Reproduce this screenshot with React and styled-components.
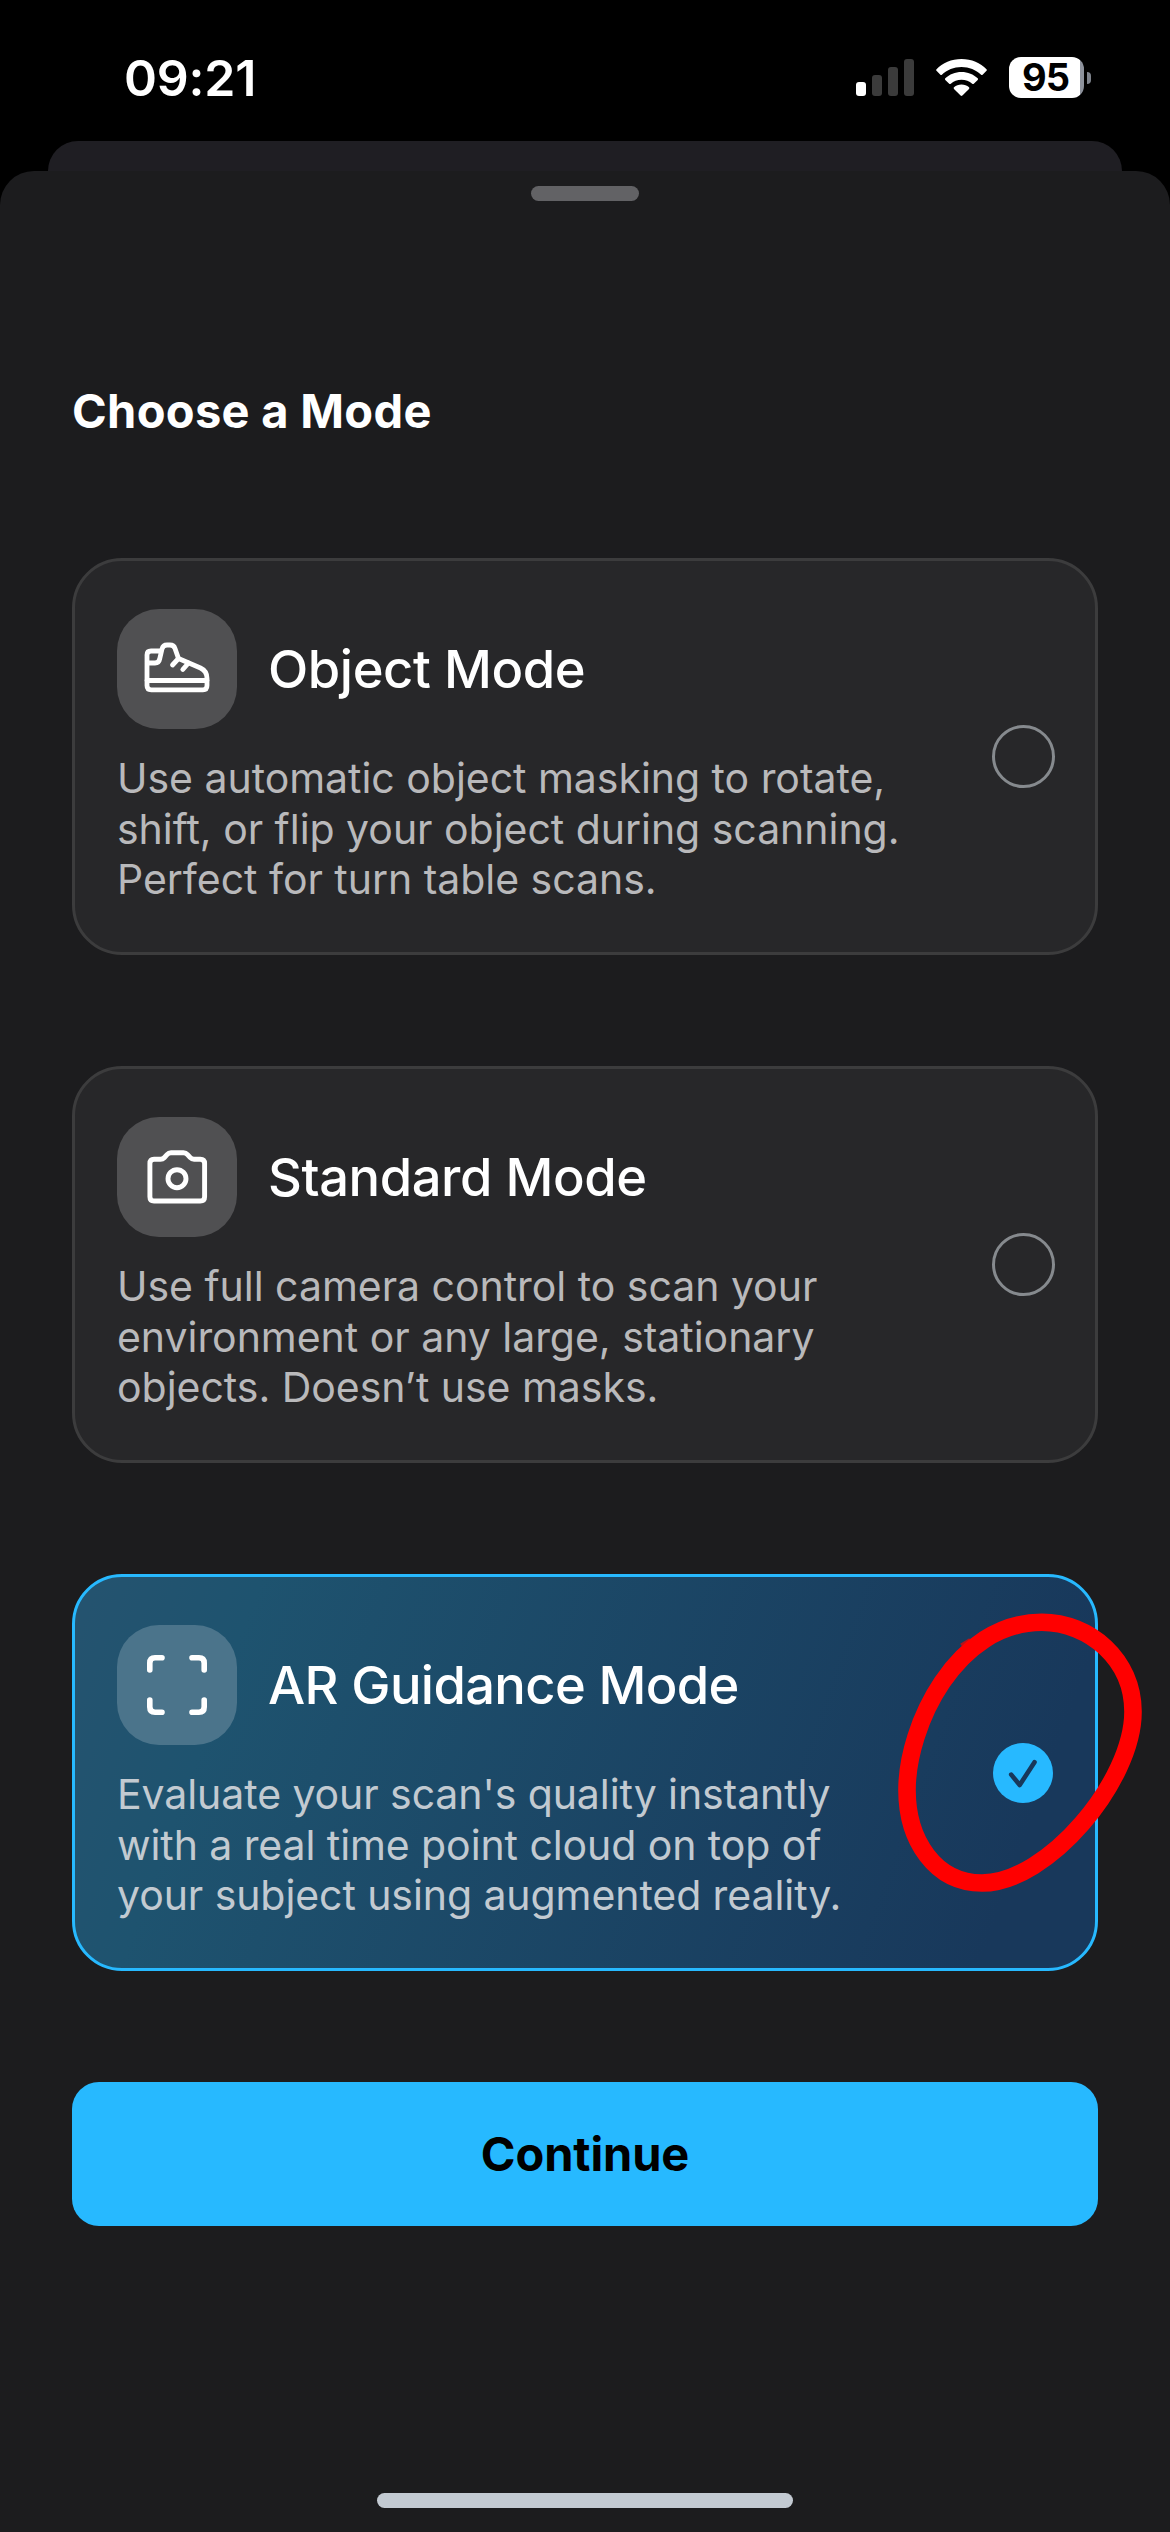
import React from "react";
import styled, { createGlobalStyle, css } from "styled-components";

const GlobalStyle = createGlobalStyle`
    * {
        box-sizing: border-box;
    }

    body {
        margin: 0;
        background: #000000;
        font-family: Inter, "Liberation Sans", sans-serif;
    }
`;

const Screen = styled.div`
    display: flex;
    flex-direction: column;
    width: 1170px;
    height: 2532px;
    overflow: hidden;
    background: #000000;
`;

const StatusBar = styled.header`
    display: flex;
    flex: none;
    justify-content: space-between;
    height: 141px;
    padding: 57px 79px 0 124px;
`;

const Clock = styled.time`
    font-size: 50px;
    font-weight: 600;
    line-height: 42px;
    letter-spacing: -0.2px;
    color: #ffffff;
`;

const StatusIcons = styled.div`
    display: flex;
    height: 41px;
`;

const Signal = styled.div`
    display: flex;
    align-items: flex-end;
    gap: 6px;
    height: 39px;
    margin-right: 22px;
`;

const SignalBar = styled.span`
    width: 10px;
    height: ${(props) => props.$height}px;
    border-radius: 3px;
    background: ${(props) => (props.$on ? "#ffffff" : "#3b3b3b")};
`;

const WifiIcon = styled.svg`
    width: 51px;
    height: 38px;
    margin: 2px 22px 0 0;
`;

const Battery = styled.div`
    display: flex;
    align-items: center;
    gap: 3px;
    height: 41px;
`;

const BatteryLevel = styled.div`
    display: flex;
    align-items: center;
    justify-content: center;
    width: 75px;
    height: 41px;
    padding-right: 2px;
    border-radius: 12px;
    background: linear-gradient(90deg, #ffffff 71px, #8d929c 71px);
    font-size: 38px;
    font-weight: 700;
    line-height: 41px;
    letter-spacing: -1px;
    color: #000000;
`;

const BatteryTip = styled.span`
    width: 4px;
    height: 12px;
    border-radius: 0 4px 4px 0;
    background: #7e838c;
`;

const BackSheet = styled.div`
    flex: none;
    height: 30px;
    margin: 0 48px;
    border-radius: 30px 30px 0 0;
    background: #1f1e23;
`;

const Sheet = styled.main`
    display: flex;
    flex: 1;
    flex-direction: column;
    align-items: center;
    padding: 15px 72px 24px;
    border-radius: 34px 34px 0 0;
    background: #1c1c1e;
`;

const Grabber = styled.span`
    width: 108px;
    height: 15px;
    border-radius: 8px;
    background: #626265;
`;

const Heading = styled.h1`
    align-self: flex-start;
    margin: 180px 0 0;
    font-size: 47px;
    font-weight: 700;
    line-height: 60px;
    letter-spacing: 0.3px;
    color: #ffffff;
`;

const ModeList = styled.div`
    display: flex;
    flex-direction: column;
    gap: 111px;
    width: 100%;
    margin: 117px 0 111px;
`;

const ModeCard = styled.section`
    position: relative;
    display: flex;
    align-items: center;
    justify-content: space-between;
    height: 397px;
    padding: 0 40px 0 42px;
    border: 3px solid #3c3c3d;
    border-radius: 50px;
    background: #272729;

    ${(props) => props.$selected && css`
        border-color: #27b9ff;
        background: linear-gradient(110deg, #24536f 2%, #1e536f 16%, #18385b 90%);
    `}
`;

const ModeInfo = styled.div`
    display: flex;
    flex-direction: column;
    gap: 24px;
    height: 295px;
`;

const ModeTop = styled.div`
    display: flex;
    align-items: center;
    gap: 31px;
`;

const IconTile = styled.div`
    display: flex;
    align-items: center;
    justify-content: center;
    width: 120px;
    height: 120px;
    border-radius: 42px;
    background: ${(props) => (props.$selected ? "#4b748b" : "#505052")};

    svg {
        width: 120px;
        height: 120px;
        fill: none;
        stroke: #ffffff;
        stroke-linecap: round;
        stroke-linejoin: round;
    }
`;

const ModeTitle = styled.h2`
    margin: 0;
    font-size: 52.5px;
    font-weight: 500;
    line-height: 64px;
    letter-spacing: ${(props) => (props.$selected ? -0.65 : -0.43)}px;
    white-space: nowrap;
    color: #ffffff;
`;

const ModeText = styled.p`
    margin: 0;
    font-size: 41px;
    line-height: 50.5px;
    letter-spacing: ${(props) => (props.$selected ? -0.08 : -0.03)}px;
    white-space: pre-line;
    color: ${(props) => (props.$selected ? "#c2cad1" : "#b9b9bb")};
`;

const Radio = styled.span`
    flex: none;
    width: 63px;
    height: 63px;
    border: 3px solid #868a8e;
    border-radius: 50%;
`;

const CheckedRadio = styled.svg`
    flex: none;
    width: 60px;
    height: 60px;
    margin-right: 2px;
`;

// hand drawn ring, lies over the radio and the card edge
const Marker = styled.svg`
    position: absolute;
    top: 19px;
    left: 805px;
    width: 290px;
    height: 310px;
    overflow: visible;
`;

const ContinueButton = styled.button`
    width: 100%;
    height: 144px;
    flex: none;
    padding: 0;
    border: 0;
    border-radius: 27px;
    background: #27b9ff;
    font-family: inherit;
    font-size: 47px;
    font-weight: 700;
    line-height: 144px;
    letter-spacing: -0.1px;
    color: #000000;
`;

const HomeIndicator = styled.span`
    width: 416px;
    height: 15px;
    margin-top: auto;
    border-radius: 8px;
    background: #c3cad2;
`;

const ShoeIcon = () => (
    <svg viewBox="0 0 120 120" strokeWidth="4.8">
        <path d="M43.500 42H34Q30 42 30 46V76.500Q30 80.800 34.300 80.800H86Q90 80.800 90 76.500V69.500Q90 62 83.500 59L61.500 49.500L58 39.500Q56.800 36 53 36H50Q46 36 45 40L42.800 49.500Q42 54 38 54H30" />
        <path d="M30 71.500H90M61.500 49.500L55.500 56M71.500 54L65.800 60.500" />
    </svg>
);

const CameraIcon = () => (
    <svg viewBox="0 0 120 120" strokeWidth="4.9">
        <path d="M37 42.300H43.500Q45.700 42.300 47.200 40.700L50 37.600Q51.600 35.800 54 35.800H66.500Q68.900 35.800 70.500 37.600L73.300 40.700Q74.800 42.300 77 42.300H83.300Q87.600 42.300 87.600 46.600V79.700Q87.600 84 83.300 84H37Q32.900 84 32.900 79.700V46.600Q32.900 42.300 37 42.300Z" />
        <circle cx="60" cy="61.700" r="9" />
    </svg>
);

const FrameIcon = () => (
    <svg viewBox="0 0 120 120" strokeWidth="5.6">
        <path d="M45 32.800H38Q32.800 32.800 32.800 38V45M75 32.800H82Q87.200 32.800 87.200 38V45M32.800 75V82Q32.800 87.200 38 87.200H45M87.200 75V82Q87.200 87.200 82 87.200H75" />
    </svg>
);

const MODES = [
    {
        title: "Object Mode",
        text: "Use automatic object masking to rotate,\nshift, or flip your object during scanning.\nPerfect for turn table scans.",
        Icon: ShoeIcon
    },
    {
        title: "Standard Mode",
        text: "Use full camera control to scan your\nenvironment or any large, stationary\nobjects. Doesn’t use masks.",
        Icon: CameraIcon
    },
    {
        title: "AR Guidance Mode",
        text: "Evaluate your scan's quality instantly\nwith a real time point cloud on top of\nyour subject using augmented reality.",
        Icon: FrameIcon,
        selected: true
    }
];

const Mode = ({ title, text, Icon, selected }) => (
    <ModeCard $selected={selected}>
        <ModeInfo>
            <ModeTop>
                <IconTile $selected={selected}>
                    <Icon />
                </IconTile>
                <ModeTitle $selected={selected}>{title}</ModeTitle>
            </ModeTop>
            <ModeText $selected={selected}>{text}</ModeText>
        </ModeInfo>
        {selected ? (
            <CheckedRadio viewBox="0 0 60 60">
                <circle cx="30" cy="30" r="30" fill="#27b9ff" />
                <path d="M18.200 31.600L26.700 42L41.500 19.200" fill="none" stroke="#18385b" strokeWidth="4.6" strokeLinecap="round" strokeLinejoin="round" />
            </CheckedRadio>
        ) : (
            <Radio />
        )}
        {selected && (
            <Marker viewBox="880 1596 290 310" fill="none">
                <path d="M961 1645L970 1639.500" stroke="#b3141c" strokeWidth="3" />
                <path
                    d="M1041.700 1622.300C1090 1622.300 1133 1660 1133 1711.700C1133 1781 1048 1883 982 1883C935 1883 907 1840 907 1790C907 1726 956 1622.300 1041.700 1622.300Z"
                    stroke="#ff0000"
                    strokeWidth="17.6"
                />
            </Marker>
        )}
    </ModeCard>
);

export default function App() {
    return (
        <Screen>
            <GlobalStyle />
            <StatusBar>
                <Clock>09:21</Clock>
                <StatusIcons>
                    <Signal>
                        <SignalBar $height={14} $on />
                        <SignalBar $height={21} />
                        <SignalBar $height={29} />
                        <SignalBar $height={37} />
                    </Signal>
                    <WifiIcon viewBox="0 0 51 38" fill="#ffffff">
                        <path d="M25.500 0C35.500 0 44.500 4 50.500 10.200Q51.200 11 50.500 11.800L46.600 15.700Q45.900 16.400 45.100 15.700C40 11 33.200 8 25.500 8S11 11 5.900 15.700Q5.100 16.400 4.400 15.700L.5 11.800Q-.2 11 .5 10.200C6.500 4 15.500 0 25.500 0Z" />
                        <path d="M25.500 13C31.800 13 37.500 15.400 41.700 19.300Q42.500 20.100 41.700 20.900L37.800 24.700Q37.100 25.400 36.200 24.700C33.400 22.200 29.600 20.800 25.500 20.800S17.600 22.200 14.800 24.700Q13.900 25.400 13.200 24.700L9.300 20.900Q8.500 20.100 9.300 19.300C13.500 15.400 19.200 13 25.500 13Z" />
                        <path d="M25.500 25.600C28.400 25.600 31 26.600 33 28.300Q33.800 29.100 33 29.900L26.400 36.500Q25.500 37.300 24.600 36.500L18 29.900Q17.200 29.100 18 28.300C20 26.600 22.600 25.600 25.500 25.600Z" />
                    </WifiIcon>
                    <Battery>
                        <BatteryLevel>95</BatteryLevel>
                        <BatteryTip />
                    </Battery>
                </StatusIcons>
            </StatusBar>
            <BackSheet />
            <Sheet>
                <Grabber />
                <Heading>Choose a Mode</Heading>
                <ModeList>
                    {MODES.map((mode) => (
                        <Mode key={mode.title} {...mode} />
                    ))}
                </ModeList>
                <ContinueButton>Continue</ContinueButton>
                <HomeIndicator />
            </Sheet>
        </Screen>
    );
}
